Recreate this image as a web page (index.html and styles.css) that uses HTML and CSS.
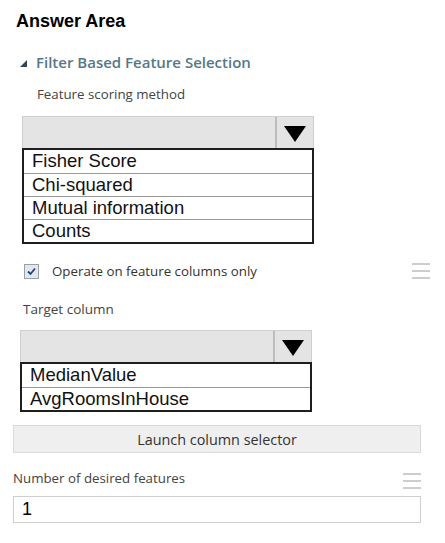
FILE: index.html
```html
<!DOCTYPE html>
<html>
<head>
<meta charset="utf-8">
<link rel="stylesheet" href="styles.css">
</head>
<body>
<div class="page">
  <h1 class="title">Answer Area</h1>
  <div class="section-head">
    <svg class="caret" width="7" height="7" viewBox="0 0 7 7"><polygon points="7,0 7,7 0,7"/></svg>
    <span>Filter Based Feature Selection</span>
  </div>
  <div class="label label-scoring">Feature scoring method</div>
  <div class="dropdown dd-scoring">
    <div class="dd-bar">
      <div class="dd-field"></div>
      <div class="dd-btn"><svg width="22" height="16" viewBox="0 0 22 16"><polygon points="0,0 22,0 11,16"/></svg></div>
    </div>
    <ul class="dd-list">
      <li>Fisher Score</li>
      <li>Chi-squared</li>
      <li>Mutual information</li>
      <li>Counts</li>
    </ul>
  </div>
  <div class="check-row">
    <span class="checkbox"><svg width="11" height="11" viewBox="0 0 11 11"><path d="M2 5.5 L4.5 8 L9 2.5" /></svg></span>
    <span class="check-label">Operate on feature columns only</span>
    <span class="menu"><i></i><i></i><i></i></span>
  </div>
  <div class="label label-target">Target column</div>
  <div class="dropdown dd-target">
    <div class="dd-bar">
      <div class="dd-field"></div>
      <div class="dd-btn"><svg width="22" height="16" viewBox="0 0 22 16"><polygon points="0,0 22,0 11,16"/></svg></div>
    </div>
    <ul class="dd-list">
      <li>MedianValue</li>
      <li>AvgRoomsInHouse</li>
    </ul>
  </div>
  <div class="launch">Launch column selector</div>
  <div class="num-row">
    <span class="label">Number of desired features</span>
    <span class="menu"><i></i><i></i><i></i></span>
  </div>
  <div class="num-input">1</div>
</div>
</body>
</html>
```
FILE: styles.css
```css
* { box-sizing: border-box; }
html, body { margin: 0; padding: 0; background: #ffffff; }
.page {
  width: 445px;
  height: 543px;
  padding: 10px 0 0 13px;
  display: flex;
  flex-direction: column;
  font-family: "Open Sans", "Noto Sans", sans-serif;
  color: #333;
}
.title {
  margin: 0 0 0 3px;
  font-family: "Liberation Sans", Arial, sans-serif;
  font-weight: bold;
  font-size: 18px;
  line-height: 22px;
  color: #000;
}
.section-head {
  margin: 20px 0 0 7px;
  display: flex;
  align-items: center;
  gap: 9px;
  height: 20px;
  font-size: 15px;
  font-weight: 600;
  line-height: 20px;
  color: #557886;
}
.caret { fill: #2f4656; margin-top: 2px; }
.label {
  font-size: 13.3px;
  line-height: 18px;
  color: #444;
}
.label-scoring { margin: 13px 0 0 24px; }
.label-target { margin: 19px 0 0 10px; font-size: 13.5px; }
.dropdown { display: flex; flex-direction: column; }
.dd-scoring { margin: 13px 0 0 9px; width: 292px; }
.dd-target { margin: 12px 0 0 7px; width: 292px; }
.dd-bar {
  display: flex;
  height: 32px;
  background: #e4e4e4;
  border: 1px solid #cfcfcf;
  border-bottom: none;
}
.dd-field { flex: 1; }
.dd-btn {
  width: 38px;
  border-left: 2px solid #bdbdbd;
  display: flex;
  align-items: center;
  justify-content: center;
  padding-top: 2px;
}
.dd-btn svg { fill: #000; }
.dd-list {
  list-style: none;
  margin: 0;
  padding: 0;
  border: 2px solid #1e1e1e;
  background: #fff;
  font-family: "Liberation Sans", Arial, sans-serif;
  font-size: 18.5px;
  color: #111;
}
.dd-list li {
  height: 23px;
  line-height: 22px;
  padding-left: 8px;
}
.dd-list li + li { border-top: 1px solid #9a9a9a; }
.check-row {
  margin: 17px 0 0 11px;
  width: 406px;
  height: 20px;
  display: flex;
  align-items: center;
}
.checkbox {
  width: 15px;
  height: 15px;
  border: 1px solid #9aa0a8;
  background: #e3e7ec;
  display: flex;
  align-items: center;
  justify-content: center;
}
.checkbox svg { fill: none; stroke: #22407a; stroke-width: 1.8; }
.check-label {
  margin-left: 13px;
  font-size: 13.3px;
  color: #333;
  flex: 1;
}
.menu {
  display: flex;
  flex-direction: column;
  gap: 5px;
  width: 18px;
}
.menu i {
  display: block;
  height: 2px;
  background: #cdcdcd;
}
.launch {
  margin-top: 13px;
  width: 408px;
  height: 28px;
  background: #efefef;
  border: 1px solid #dadada;
  display: flex;
  align-items: center;
  justify-content: center;
  font-size: 14.4px;
  color: #333;
}
.num-row {
  margin-top: 16px;
  width: 408px;
  height: 18px;
  display: flex;
  justify-content: space-between;
  align-items: flex-end;
}
.num-row .menu { margin-top: 4px; align-self: flex-start; }
.num-input {
  margin-top: 9px;
  width: 408px;
  height: 27px;
  border: 1px solid #cfcfcf;
  padding-left: 8px;
  font-family: "Liberation Sans", Arial, sans-serif;
  font-size: 18px;
  line-height: 25px;
  color: #000;
}
```
